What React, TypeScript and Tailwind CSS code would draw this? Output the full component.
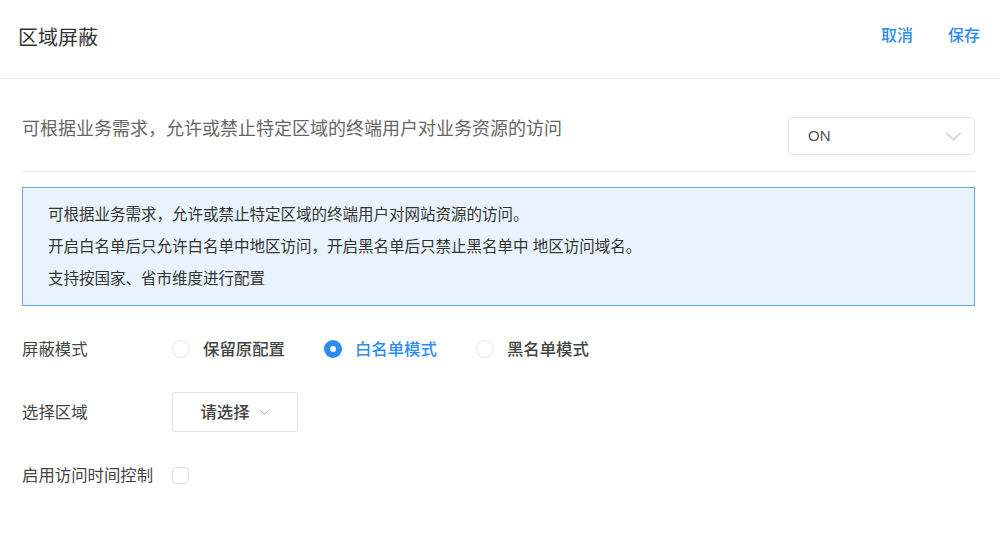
import React, { useState } from 'react';

const FONT = '"Helvetica Neue", "Liberation Sans", "Noto Sans CJK SC", sans-serif';

const Chevron: React.FC<{ className?: string }> = ({ className }) => (
  <svg viewBox="0 0 16 9" className={className} fill="none" stroke="currentColor" strokeWidth="1.2">
    <path d="M1 1l7 7 7-7" />
  </svg>
);

const modes = ['保留原配置', '白名单模式', '黑名单模式'];

const App: React.FC = () => {
  const [mode, setMode] = useState(1);
  const [timeCtrl, setTimeCtrl] = useState(false);

  return (
    <div className="w-[1000px] h-[541px] bg-white text-[#333]" style={{ fontFamily: FONT }}>
      {/* header */}
      <div className="h-[79px] flex items-center justify-between pl-[18px] pr-[20px] border-b border-[#e8eaec]">
        <h1 className="text-[20px] leading-none mb-[2px]">区域屏蔽</h1>
        <div className="flex items-center gap-[35px] text-[16px] font-medium text-[#2d8cf0] mb-[7px]">
          <button>取消</button>
          <button>保存</button>
        </div>
      </div>

      <div className="pl-[22px] pr-[25px]">
        <div className="flex items-start justify-between pt-[37px] pb-[16px] border-b border-[#e8eaec]">
          <p className="text-[18px] leading-[26px] text-[#666]">可根据业务需求，允许或禁止特定区域的终端用户对业务资源的访问</p>
          <div className="w-[187px] h-[38px] mt-[1px] flex items-center justify-between pl-[19px] pr-[12px] border border-[#e3e5e8] rounded-[4px]">
            <span className="text-[15px] text-[#555]">ON</span>
            <Chevron className="w-[17px] h-[9px] text-[#c5c8ce]" />
          </div>
        </div>

        <div className="mt-[15px] bg-[#e8f3fe] border border-[#6ea5dc] pl-[25px] pt-[11px] pb-[10px] text-[15.5px] leading-[32px] text-[#333]">
          <p>可根据业务需求，允许或禁止特定区域的终端用户对网站资源的访问。</p>
          <p>开启白名单后只允许白名单中地区访问，开启黑名单后只禁止黑名单中 地区访问域名。</p>
          <p>支持按国家、省市维度进行配置</p>
        </div>

        <div className="mt-[23px] h-10 flex items-center text-[16.4px]">
          <span className="w-[150px] text-[#444]">屏蔽模式</span>
          <div className="flex items-center">
            {modes.map((m, i) => (
              <label key={m} className="flex items-center mr-[39px] cursor-pointer" onClick={() => setMode(i)}>
                {mode === i ? (
                  <span className="w-[18px] h-[18px] rounded-full bg-[#2d8cf0] flex items-center justify-center">
                    <span className="w-[6px] h-[6px] rounded-full bg-white" />
                  </span>
                ) : (
                  <span className="w-[18px] h-[18px] rounded-full border border-[#e3e5e8]" />
                )}
                <span className={`ml-[13px] font-medium ${mode === i ? 'text-[#2d8cf0]' : 'text-[#444]'}`}>{m}</span>
              </label>
            ))}
          </div>
        </div>

        <div className="mt-[23px] h-10 flex items-center text-[16.4px]">
          <span className="w-[150px] text-[#444]">选择区域</span>
          <button className="w-[126px] h-10 flex items-center justify-center gap-[9px] border border-[#e3e5e8] rounded-[3px] font-medium text-[#444]">
            请选择
            <Chevron className="w-[11px] h-[6px] text-[#888]" />
          </button>
        </div>

        <div className="mt-[23px] h-10 flex items-center text-[16.4px]">
          <span className="w-[150px] text-[#444]">启用访问时间控制</span>
          <span
            onClick={() => setTimeCtrl(!timeCtrl)}
            className={`w-[17px] h-[17px] rounded-[4px] border cursor-pointer ${timeCtrl ? 'bg-[#2d8cf0] border-[#2d8cf0]' : 'border-[#dcdee2]'}`}
          />
        </div>
      </div>
    </div>
  );
};

export default App;
